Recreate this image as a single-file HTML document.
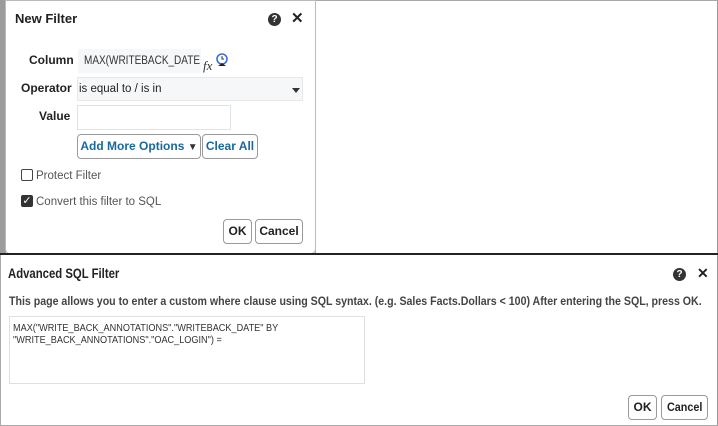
<!DOCTYPE html>
<html><head><style>
*{box-sizing:border-box;margin:0;padding:0}
body{width:718px;height:426px;background:#fff;position:relative;overflow:hidden;font-family:"Liberation Sans",sans-serif;color:#222}
.abs{position:absolute}
.sq{transform-origin:0 0;white-space:nowrap}
.btn{position:absolute;border:1px solid #9a9a9a;border-radius:4px;background:#fff;font-weight:bold;font-size:12px;text-align:center}
</style></head><body>
<div class="abs" style="left:0;top:0;width:6px;height:254px;background:#9c9c9c"></div>
<div class="abs" style="left:315px;top:0;width:403px;height:254px;border-top:1px solid #aaa;border-right:1px solid #999;border-left:1px solid #aaa"></div>
<!-- New Filter dialog -->
<div class="abs" style="left:5px;top:0;width:311px;height:254px;background:#fff;border:1px solid #bbb;border-radius:0 0 5px 5px"></div>
<div class="abs" style="left:15px;top:11px;font-size:13px;font-weight:bold">New Filter</div>
<div class="abs" style="left:268px;top:13px;width:13px;height:13px;border-radius:50%;background:#333;color:#fff;font-size:10px;font-weight:bold;text-align:center;line-height:13px">?</div>
<div class="abs" style="left:291px;top:9px;font-size:15px;font-weight:bold">✕</div>
<div class="abs" style="left:29px;top:53px;font-size:12px;font-weight:bold">Column</div>
<div class="abs" style="left:78px;top:49px;width:123px;height:24px;background:#f6f7f8"></div>
<div class="abs sq" style="left:84px;top:55px;font-size:11.5px;color:#333;transform:scaleX(0.87)">MAX(WRITEBACK_DATE</div>
<div class="abs" style="left:203px;top:58px;font-size:13px;font-style:italic;font-family:'Liberation Serif',serif;color:#333">fx</div>
<svg class="abs" style="left:215px;top:53px" width="14" height="14" viewBox="0 0 14 14"><circle cx="7" cy="6" r="5" fill="#fff" stroke="#3a6fd8" stroke-width="1.6"/><path d="M7 3v3h2" stroke="#333" fill="none"/><path d="M3 13l4-3 4 3z" fill="#223"/></svg>
<div class="abs" style="left:21px;top:81px;font-size:12px;font-weight:bold">Operator</div>
<div class="abs" style="left:77px;top:77px;width:226px;height:24px;background:#f6f7f8;border:1px solid #e6e8ea"></div>
<div class="abs" style="left:79px;top:83px;font-size:11.5px">is equal to / is in</div>
<div class="abs" style="left:292px;top:88px;width:0;height:0;border-left:4px solid transparent;border-right:4px solid transparent;border-top:5px solid #333"></div>
<div class="abs" style="left:39px;top:109px;font-size:12px;font-weight:bold">Value</div>
<div class="abs" style="left:77px;top:105px;width:154px;height:25px;background:#fff;border:1px solid #e0e3e6"></div>
<div class="btn" style="left:77px;top:134px;width:124px;height:25px;line-height:23px;color:#17699e">Add More Options <span style="color:#333;font-size:10px">▼</span></div>
<div class="btn" style="left:202px;top:134px;width:56px;height:25px;line-height:23px;color:#17699e">Clear All</div>
<div class="abs" style="left:21px;top:169px;width:12px;height:12px;border:1px solid #444;border-radius:2px"></div>
<div class="abs" style="left:36px;top:170px;font-size:11.5px;color:#555">Protect Filter</div>
<div class="abs" style="left:21px;top:195px;width:12px;height:12px;background:#333;border-radius:2px;color:#fff;font-size:11px;line-height:12px;text-align:center">✓</div>
<div class="abs" style="left:36px;top:196px;font-size:11.5px;color:#555">Convert this filter to SQL</div>
<div class="btn" style="left:223px;top:219px;width:29px;height:25px;line-height:23px">OK</div>
<div class="btn" style="left:255px;top:219px;width:48px;height:25px;line-height:23px">Cancel</div>
<!-- divider -->
<div class="abs" style="left:0;top:253px;width:718px;height:2px;background:#222"></div>
<!-- Advanced SQL Filter -->
<div class="abs" style="left:0;top:255px;width:718px;height:171px;border-left:1px solid #aaa;border-right:1px solid #999;border-bottom:1px solid #aaa"></div>
<div class="abs sq" style="left:8px;top:266px;font-size:13.5px;font-weight:bold;transform:scaleX(0.84)">Advanced SQL Filter</div>
<div class="abs" style="left:673px;top:268px;width:13px;height:13px;border-radius:50%;background:#333;color:#fff;font-size:10px;font-weight:bold;text-align:center;line-height:13px">?</div>
<div class="abs" style="left:697px;top:265px;font-size:14px;font-weight:bold">✕</div>
<div class="abs sq" style="left:9px;top:294px;font-size:12.2px;font-weight:bold;color:#444;transform:scaleX(0.87)">This page allows you to enter a custom where clause using SQL syntax. (e.g. Sales Facts.Dollars &lt; 100) After entering the SQL, press OK.</div>
<div class="abs" style="left:9px;top:316px;width:356px;height:68px;border:1px solid #dde0e3;background:#fff"></div>
<div class="abs sq" style="left:13px;top:322px;font-size:10.5px;line-height:12px;color:#333;transform:scaleX(0.87)">MAX("WRITE_BACK_ANNOTATIONS"."WRITEBACK_DATE" BY<br>"WRITE_BACK_ANNOTATIONS"."OAC_LOGIN") =</div>
<div class="btn" style="left:628px;top:395px;width:29px;height:25px;line-height:23px;font-size:12px">OK</div>
<div class="btn" style="left:661px;top:395px;width:47px;height:25px;line-height:23px;font-size:12px"><span class="sq" style="display:inline-block;transform:scaleX(0.9);transform-origin:50% 0">Cancel</span></div>
</body></html>
